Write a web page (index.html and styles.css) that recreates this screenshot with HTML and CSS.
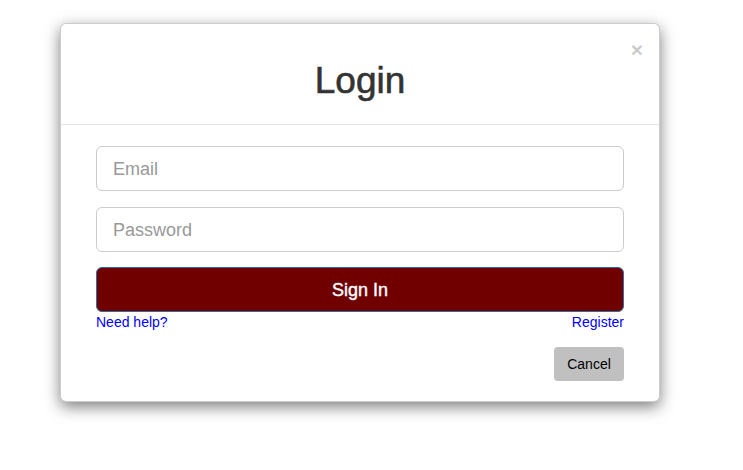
FILE: index.html
```html
<!DOCTYPE html>
<html>
<head>
<meta charset="utf-8">
<link rel="stylesheet" href="styles.css">
</head>
<body>
<div class="modal">
  <div class="modal-header">
    <button class="close" type="button">×</button>
    <h1 class="title">Login</h1>
  </div>
  <div class="modal-body">
    <input class="field" type="text" placeholder="Email">
    <input class="field field-last" type="password" placeholder="Password">
    <button class="signin" type="button">Sign In</button>
    <div class="links">
      <a href="#">Need help?</a>
      <a href="#">Register</a>
    </div>
    <div class="actions">
      <button class="cancel" type="button">Cancel</button>
    </div>
  </div>
</div>
</body>
</html>
```

FILE: styles.css
```css
html, body {
  margin: 0;
  padding: 0;
  background: #fff;
}
body {
  font-family: "Liberation Sans", Arial, Helvetica, sans-serif;
  padding-top: 23px;
  min-height: 470px;
  box-sizing: border-box;
}
.modal {
  position: relative;
  width: 598px;
  margin-left: 60px;
  background: #fff;
  border: 1px solid rgba(0,0,0,0.2);
  border-radius: 6px;
  box-shadow: 0 5px 15px rgba(0,0,0,0.5);
}
.modal-header {
  padding: 37px 15px 23px;
  border-bottom: 1px solid #e5e5e5;
  text-align: center;
}
.title {
  margin: 0;
  font-size: 37px;
  line-height: 40px;
  font-weight: normal;
  color: #333;
  -webkit-text-stroke: 0.6px #333;
}
.close {
  position: absolute;
  top: 15px;
  right: 16px;
  padding: 0;
  border: 0;
  background: transparent;
  font-family: "Liberation Sans", Arial, sans-serif;
  font-size: 21px;
  font-weight: bold;
  line-height: 1;
  color: #000;
  opacity: 0.2;
  cursor: pointer;
}
.modal-body {
  padding: 21px 35px 20px;
  display: flex;
  flex-direction: column;
}
.field {
  box-sizing: border-box;
  height: 45px;
  margin: 0 0 16px;
  padding: 2px 16px 0;
  border: 1px solid #ccc;
  border-radius: 6px;
  font-family: "Liberation Sans", Arial, sans-serif;
  font-size: 18px;
  color: #555;
  outline: none;
}
.field-last {
  margin-bottom: 15px;
}
.field::placeholder {
  color: #999;
}
.signin {
  box-sizing: border-box;
  height: 45px;
  margin: 0;
  padding: 2px 0 0;
  border: 1px solid #2e6da4;
  border-radius: 6px;
  background: #700000;
  color: #fff;
  font-family: "Liberation Sans", Arial, sans-serif;
  font-size: 18px;
  -webkit-text-stroke: 0.4px #fff;
  cursor: pointer;
}
.links {
  display: flex;
  justify-content: space-between;
  font-size: 14px;
  line-height: 21px;
}
.links a {
  color: #00f;
  text-decoration: none;
}
.actions {
  display: flex;
  justify-content: flex-end;
  margin-top: 14px;
}
.cancel {
  width: 70px;
  height: 34px;
  border: 0;
  border-radius: 4px;
  background: #c0c0c0;
  color: #000;
  font-family: "Liberation Sans", Arial, sans-serif;
  font-size: 14px;
  cursor: pointer;
}
```
